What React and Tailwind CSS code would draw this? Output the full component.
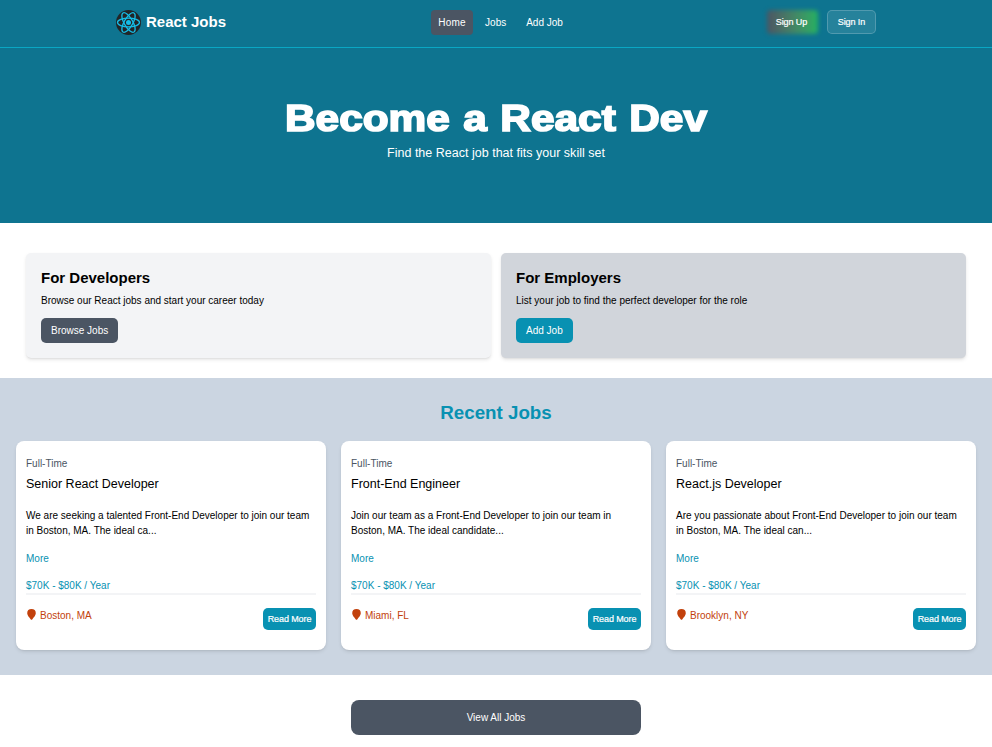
import React from "react";

const jobs = [
  {
    title: "Senior React Developer",
    lines: ["We are seeking a talented Front-End Developer to join our team", "in Boston, MA. The ideal ca..."],
    location: "Boston, MA",
  },
  {
    title: "Front-End Engineer",
    lines: ["Join our team as a Front-End Developer to join our team in", "Boston, MA. The ideal candidate..."],
    location: "Miami, FL",
  },
  {
    title: "React.js Developer",
    lines: ["Are you passionate about Front-End Developer to join our team", "in Boston, MA. The ideal can..."],
    location: "Brooklyn, NY",
  },
];

function Logo() {
  return (
    <svg className="mt-px h-[25px] w-[25px]" viewBox="0 0 50 50" fill="none" stroke="#15bde6" strokeWidth="2.6">
      <circle cx="25" cy="25" r="25" fill="#222527" stroke="none" />
      <ellipse cx="25" cy="25" rx="22" ry="8.6" />
      <ellipse cx="25" cy="25" rx="22" ry="8.6" transform="rotate(60 25 25)" />
      <ellipse cx="25" cy="25" rx="22" ry="8.6" transform="rotate(120 25 25)" />
      <circle cx="25" cy="25" r="5" fill="#15bde6" stroke="none" />
    </svg>
  );
}

function Pin() {
  return (
    <svg className="mt-px h-[11px] w-[9px]" viewBox="0 0 9 11" fill="#c2410c">
      <path d="M4.5 0A4.3 4.3 0 0 0 .2 4.2C.2 6.4 2.4 8.4 3.6 10.2q.9 1.1 1.8 0C6.600 8.400 8.800 6.400 8.800 4.200A4.300 4.300 0 0 0 4.500 0Z" />
    </svg>
  );
}

function Navbar() {
  return (
    <nav className="flex h-12 justify-between border-b border-[#0aa7c4] px-[116px] text-[10px] leading-[15px] text-white">
      <div className="flex w-[209px] items-start gap-[5px] pt-[9px]">
        <Logo />
        <span className="text-[15px] leading-[26px] font-bold">React Jobs</span>
      </div>
      <div className="flex items-start gap-[5px] pt-[10px]">
        <a className="w-[42px] rounded-[4px] bg-[#4b5563] py-[5px] text-center tracking-[0.2px]">Home</a>
        <a className="px-[7px] py-[5px]">Jobs</a>
        <a className="pr-[7px] pl-[8px] py-[5px]">Add Job</a>
      </div>
      <div className="flex w-[200px] items-start justify-end gap-[9px] pt-[10px]">
        <button className="relative h-6 w-[51px] pr-[2px] text-[9px] leading-6 tracking-[-0.1px]">
          <span className="absolute inset-0 rounded-[4px] bg-gradient-to-r from-[#4b5563] to-[#22b161] blur-[2px]" />
          <span className="relative [-webkit-text-stroke:0.2px_white]">Sign Up</span>
        </button>
        <button className="h-6 w-[49px] rounded-[5px] border border-white/20 bg-white/10 text-[9px] leading-[22px] tracking-[-0.1px] [-webkit-text-stroke:0.2px_white]">
          Sign In
        </button>
      </div>
    </nav>
  );
}

function InfoBox({ title, text, button, boxClass, buttonClass }) {
  return (
    <div className={"h-[105px] flex-1 rounded-[5px] p-[15px] shadow-[0_2px_4px_-1px_rgba(0,0,0,0.15),0_1px_2px_-1px_rgba(0,0,0,0.1)] " + boxClass}>
      <h2 className="text-[15px] leading-5 font-bold">{title}</h2>
      <p className="mt-[5px] mb-[10px] text-[10px] leading-[15px]">{text}</p>
      <a className={"block w-fit rounded-[5px] px-[10px] py-[5px] text-[10px] leading-[15px] text-white " + buttonClass}>
        {button}
      </a>
    </div>
  );
}

function JobCard({ job }) {
  return (
    <div className="h-[209px] w-[310px] rounded-[8px] bg-white px-[10px] pt-[15px] text-[10px] leading-[15px] shadow-[0_2px_4px_-1px_rgba(0,0,0,0.15),0_1px_2px_-1px_rgba(0,0,0,0.1)]">
      <div className="text-[#4b5563]">Full-Time</div>
      <h3 className="mt-[4px] text-[12.5px] leading-[18px]">{job.title}</h3>
      <div className="mt-[15px] whitespace-nowrap">
        {job.lines.map((line) => (
          <div key={line}>{line}</div>
        ))}
      </div>
      <div className="mt-[13px] text-[#0891b2]">More</div>
      <div className="mt-[12px] text-[#0891b2]">$70K - $80K / Year</div>
      <div className="h-[2px] bg-[#f3f4f6]" />
      <div className="mt-[13px] flex items-start justify-between">
        <div className="flex gap-[4px] pl-px text-[#c2410c]">
          <Pin />
          <span>{job.location}</span>
        </div>
        <a className="h-[22px] w-[53px] rounded-[5px] bg-[#0891b2] text-center text-[9px] leading-[22px] tracking-[-0.1px] text-white [-webkit-text-stroke:0.2px_white]">
          Read More
        </a>
      </div>
    </div>
  );
}

export default function App() {
  return (
    <div className="h-[747px] w-[992px] overflow-hidden bg-white font-['Liberation_Sans',Arial,sans-serif] text-black">
      <div className="h-[223px] bg-[#0e7490]">
        <Navbar />
        <header className="pt-[45px] text-center text-white">
          <h1 className="scale-x-[1.13] text-[37.5px] leading-[50px] font-black [word-spacing:1.5px] [-webkit-text-stroke:1.7px_white]">
            Become a React Dev
          </h1>
          <p className="text-[12.5px] leading-[20px] tracking-[0.01px]">Find the React job that fits your skill set</p>
        </header>
      </div>
      <section className="flex h-[155px] gap-[10px] px-[26px] pt-[30px]">
        <InfoBox
          title="For Developers"
          text="Browse our React jobs and start your career today"
          button="Browse Jobs"
          boxClass="bg-[#f3f4f6]"
          buttonClass="bg-[#4b5563]"
        />
        <InfoBox
          title="For Employers"
          text="List your job to find the perfect developer for the role"
          button="Add Job"
          boxClass="bg-[#d1d5db]"
          buttonClass="bg-[#0891b2]"
        />
      </section>
      <section className="h-[297px] bg-[#cbd5e1] px-4 pt-[20px]">
        <h2 className="mb-[13px] text-center text-[18.75px] leading-[30px] font-bold text-[#0891b2]">Recent Jobs</h2>
        <div className="flex gap-[15px]">
          {jobs.map((job) => (
            <JobCard key={job.title} job={job} />
          ))}
        </div>
      </section>
      <section className="flex justify-center pt-[25px]">
        <a className="h-[35px] w-[290px] rounded-[8px] bg-[#4b5563] text-center text-[10px] leading-[35px] text-white">
          View All Jobs
        </a>
      </section>
    </div>
  );
}
